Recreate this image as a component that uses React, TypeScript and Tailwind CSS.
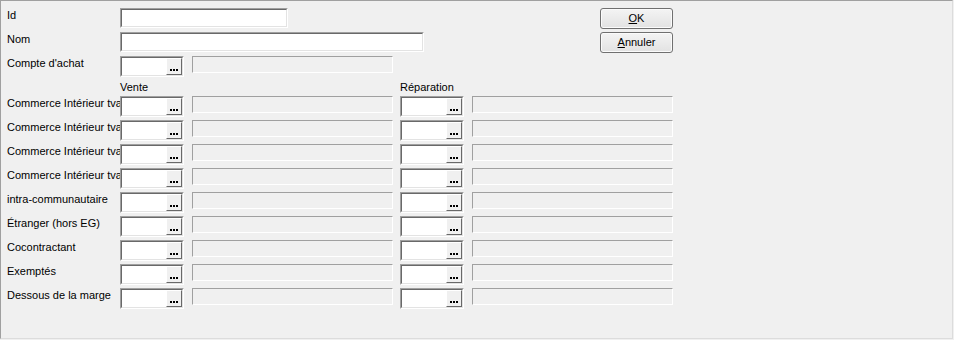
import React from "react";

const Dots = () => (
  <div className="w-[16px] h-full bg-[#f0f0f0] border border-t-white border-l-white border-b-[#696969] border-r-[#696969] flex items-end justify-center gap-[1px] pb-[3px]">
    <span className="w-[2px] h-[2px] bg-black" />
    <span className="w-[2px] h-[2px] bg-black" />
    <span className="w-[2px] h-[2px] bg-black" />
  </div>
);

const Lookup = () => (
  <div className="w-[64px] h-[21px] flex-none bg-white border border-t-[#a0a0a0] border-l-[#a0a0a0] border-b-white border-r-white">
    <div className="h-full border border-t-[#696969] border-l-[#696969] border-b-[#e3e3e3] border-r-[#e3e3e3] flex justify-end">
      <Dots />
    </div>
  </div>
);

const Disabled = () => (
  <div className="w-[201px] h-[17px] flex-none bg-[#f0f0f0] border border-t-[#a0a0a0] border-l-[#a0a0a0] border-b-white border-r-white" />
);

const TextInput = ({ w }: { w: string }) => (
  <div className={`${w} h-[20px] flex-none bg-white border border-t-[#a0a0a0] border-l-[#a0a0a0] border-b-white border-r-white`}>
    <div className="h-full border border-t-[#696969] border-l-[#696969] border-b-[#e3e3e3] border-r-[#e3e3e3]" />
  </div>
);

const Label = ({ text }: { text: string }) => (
  <div className="w-[113px] flex-none overflow-hidden whitespace-nowrap pt-[1px]">{text}</div>
);

const rows = [
  "Commerce Intérieur tva",
  "Commerce Intérieur tva",
  "Commerce Intérieur tva",
  "Commerce Intérieur tva",
  "intra-communautaire",
  "Étranger (hors EG)",
  "Cocontractant",
  "Exemptés",
  "Dessous de la marge",
];

const Btn = ({ first, rest }: { first: string; rest: string }) => (
  <button className="w-[73px] h-[21px] rounded-[3px] border border-[#707070] bg-linear-to-b from-[#f4f4f4] to-[#e2e2e2] shadow-[inset_0_0_0_1px_#fbfbfb] text-black flex items-center justify-center leading-[13px]">
    <span>
      <span className="underline">{first}</span>
      {rest}
    </span>
  </button>
);

export default function App() {
  return (
    <div className="w-[954px] h-[340px] bg-[#f0f0f0] font-['Liberation_Sans',Arial,sans-serif] text-[11px] leading-[13px] text-black">
      <div className="w-[953px] h-[339px] border-t border-l border-t-[#a0a0a0] border-l-[#a0a0a0] border-b border-r border-b-[#dcdcdc] border-r-[#dcdcdc] pl-[6px] pt-[7px]">
        <div className="flex">
          <div className="w-[593px] flex-none flex flex-col">
            <div className="h-[24px] flex items-start">
              <Label text="Id" />
              <TextInput w="w-[168px]" />
            </div>
            <div className="h-[24px] flex items-start">
              <Label text="Nom" />
              <TextInput w="w-[304px]" />
            </div>
          </div>
          <div className="flex flex-col gap-[3px]">
            <Btn first="O" rest="K" />
            <Btn first="A" rest="nnuler" />
          </div>
        </div>
        <div className="h-[24px] flex items-start">
          <Label text="Compte d'achat" />
          <Lookup />
          <div className="w-[8px]" />
          <Disabled />
        </div>
        <div className="h-[16px] flex items-start">
          <div className="w-[113px] flex-none" />
          <div className="w-[280px] flex-none pt-[1px]">Vente</div>
          <div className="pt-[1px]">Réparation</div>
        </div>
        {rows.map((r, i) => (
          <div key={i} className="h-[24px] flex items-start">
            <Label text={r} />
            <Lookup />
            <div className="w-[8px] flex-none" />
            <Disabled />
            <div className="w-[7px] flex-none" />
            <Lookup />
            <div className="w-[8px] flex-none" />
            <Disabled />
          </div>
        ))}
      </div>
    </div>
  );
}
